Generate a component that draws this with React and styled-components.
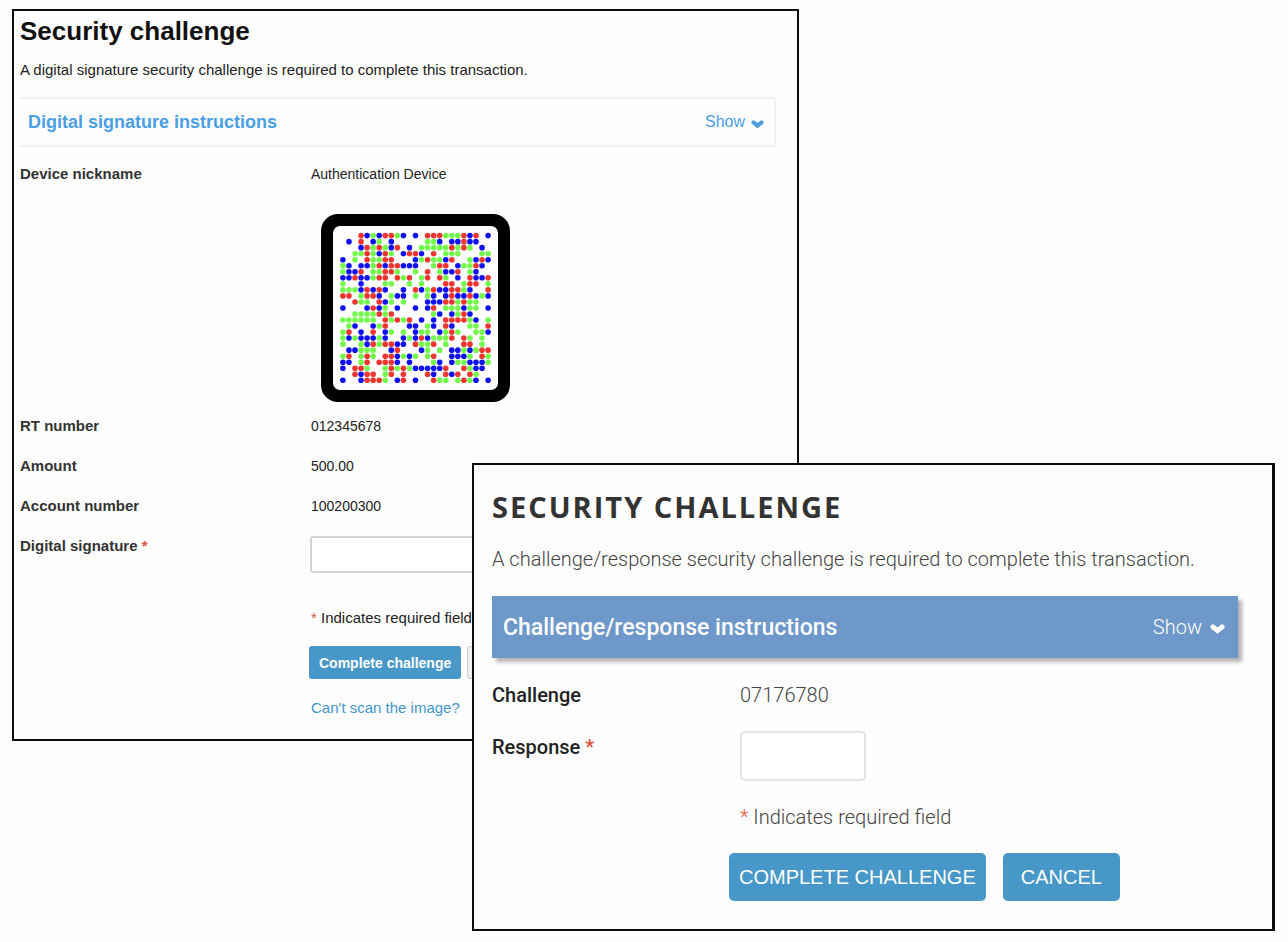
import React from "react";
import styled, { createGlobalStyle } from "styled-components";

const GlobalStyle = createGlobalStyle`
  *, *::before, *::after { box-sizing: border-box; }
  body { margin: 0; background: #fefefe; }
  h1, h2, p { margin: 0; }
`;

const Page = styled.main`
  display: grid;
  grid-template-columns: 460fr 327fr 476fr;
  align-items: start;
  padding: 9px 13px 11px 12px;
`;

const Panel = styled.section`
  min-width: 0;
  grid-row: 1;
  border: 2px solid #0c0c0c;
  background: #fefefe;
`;

const BackPanel = styled(Panel)`
  grid-column: 1 / 3;
  padding: 4px 21px 21px 6px;
  font: 15px/20px "Liberation Sans", Arial, sans-serif;
  color: #222;
`;

const FrontPanel = styled(Panel)`
  grid-column: 2 / 4;
  z-index: 1;
  margin-top: 454px;
  padding: 22px 34px 28px 18px;
  border-right-width: 3px;
  font: 300 20px/24px Roboto, sans-serif;
  color: #444;
`;

const Title = styled.h1`
  font-size: 26px;
  line-height: 32px;
  font-weight: 700;
  color: #111;
`;

const CapsTitle = styled.h2`
  font: 700 29px/40px "Open Sans", sans-serif;
  letter-spacing: 2px;
  text-transform: uppercase;
  color: #333;
`;

const Intro = styled.p`
  margin-top: ${(p) => p.$gap}px;
`;

const Disclosure = styled.button`
  display: flex;
  justify-content: space-between;
  align-items: center;
  width: 100%;
  font-family: inherit;
  cursor: pointer;
`;

const LightDisclosure = styled(Disclosure)`
  height: 50px;
  margin: 17px 0 7px;
  padding: 0 10px 0 8px;
  border: 2px solid #f2f2f2;
  border-left: 0;
  background: transparent;
  color: #4a9ee3;
  font-size: 18px;
  font-weight: 700;
`;

const BlueDisclosure = styled(Disclosure)`
  height: 62px;
  margin: 25px 0;
  padding: 0 13px 0 11px;
  border: 0;
  background: #6f98ca;
  box-shadow: 4px 4px 4px rgba(0, 0, 0, 0.3);
  color: #fff;
  font-size: 23px;
  font-weight: 500;
`;

const Toggle = styled.span`
  display: flex;
  align-items: center;
  gap: ${(p) => p.$gap}px;
  font-size: ${(p) => p.$size}px;
  font-weight: ${(p) => p.$weight};

  svg { margin-top: 4px; }
`;

const Row = styled.div`
  display: grid;
  grid-template-columns: 290px minmax(0, 1fr);
  align-items: start;
  padding: 10px 0;
`;

const WideRow = styled(Row)`
  grid-template-columns: 248px minmax(0, 1fr);
  padding: 0 0 24px;
`;

const Label = styled.label`
  font-weight: 700;
  color: #333;
`;

const MediumLabel = styled.label`
  padding-top: ${(p) => p.$drop || 0}px;
  font-weight: 500;
  color: #222;
`;

const Value = styled.output`
  padding-left: ${(p) => p.$inset || 0}px;
  font-size: ${(p) => p.$size}px;
`;

const Field = styled.input`
  width: ${(p) => p.$width}px;
  height: ${(p) => p.$height}px;
  padding: 0 8px;
  border: 2px solid ${(p) => p.$line};
  border-radius: ${(p) => p.$radius}px;
  background: #fff;
  font: inherit;
`;

const Star = styled.span`
  color: #e0503f;
`;

const CodeHolder = styled.div`
  padding: 20px 0 4px 301px;
`;

const CodeFrame = styled.div`
  width: 189px;
  height: 188px;
  border: 12px solid #000;
  border-radius: 17px;
  background: #000;

  svg {
    display: block;
    width: 100%;
    height: 100%;
    border-radius: 7px;
    background: #fff;
  }
`;

const Note = styled.p`
  padding: ${(p) => p.$top || 0}px 0 0 ${(p) => p.$indent}px;
`;

const Actions = styled.div`
  display: flex;
  gap: ${(p) => p.$gap}px;
  padding: ${(p) => p.$top}px 0 0 ${(p) => p.$indent}px;
`;

const SmallButton = styled.button`
  height: 33px;
  padding: 0 10px;
  border: ${(p) => (p.$plain ? "1px solid #ccc" : "0")};
  border-radius: 3px;
  background: ${(p) => (p.$plain ? "#eee" : "#4798c8")};
  color: ${(p) => (p.$plain ? "#333" : "#fff")};
  font: 700 14px/20px "Liberation Sans", Arial, sans-serif;
`;

const LargeButton = styled.button`
  height: 48px;
  padding: 0 ${(p) => p.$pad}px;
  border: 0;
  border-radius: 5px;
  background: #4798c8;
  color: #fff;
  font: 20px/24px "Liberation Sans", Arial, sans-serif;
  text-transform: uppercase;
  white-space: nowrap;
`;

const HelpLink = styled.a`
  display: block;
  width: fit-content;
  margin: 19px 0 0 291px;
  color: #3f97c9;
  text-decoration: none;
`;

const CODE = [
  "...RBGBRRGB.B.RRRGGGRBR.B",
  ".B.R.BG.B.....GGB.BBRBB..",
  "...BRGRGBR.B.GGGGGRGRG.B.",
  "..GGRGBRG.BRRB.R.GGG...GG",
  "B.G.RGGRR...BGRGGBR..GBRB",
  "GB.BBGRBRRBBB..GRR.BGGRB.",
  "GBBR.GGRRG..G.R.GBBR.GB..",
  "BBRBBGRR.RGR.GR.RG.B.RBBR",
  "G..B...GG..G.G...RR.GRR.G",
  "GGGBRBRB..B.RBGRBBRRGB..R",
  "RR.GRRB.GBB.G.GB.BRBBRBGB",
  "..RGG.RBG.G...BBBRRGRGG..",
  "B...BRBG.B..B.BR.GGGBGG.B",
  "..GGGGRGR......GB.BGRB...",
  "GGGGGG.RGRGR.B.B.RRRRGB.G",
  ".GB..BGR...BB.GB.RB..GG.R",
  "GR.B.R.BG.G.BGG.BGRG..GGB",
  "GBGBBBGB..BGBRBGGGR.RG.G.",
  "G..GBRGRRBB.RGGR.G..RR.G.",
  ".BBGGG..BR...BG.G.BBGBGRR",
  "GR.GRG.RRBGBG.GR..BBBG.RG",
  "BB.GR.RRRB.B...GB.BGGBBBG",
  "B.RRG..GRGRGBBBBBR..RGBB.",
  "..RBRR.GR.R...RB.RBR.RG..",
  "B..BRRRG.BR.B..RGG.GRGB.B",
];
const INK = { R: "#ee3530", G: "#74fa4c", B: "#1010f4" };

function ColourCode() {
  return (
    <CodeFrame>
      <svg viewBox="0 0 165 164" role="img" aria-label="Transaction code">
        {CODE.flatMap((line, y) =>
          [...line].map((c, x) =>
            c === "." ? null : (
              <circle key={`${x}-${y}`} cx={9.9 + x * 6.05} cy={9.6 + y * 6.03} r="2.8" fill={INK[c]} />
            )
          )
        )}
      </svg>
    </CodeFrame>
  );
}

function Chevron({ width }) {
  return (
    <svg width={width} height={(width * 9) / 14} viewBox="0 0 14 9" fill="currentColor" aria-hidden="true">
      <path d="M1 1.2Q2.6-.6 4.2 1L7 3.2 9.8 1Q11.4-.6 13 1.2 14.4 2.9 12.8 4.4L7 9 1.2 4.4Q-.4 2.9 1 1.2Z" />
    </svg>
  );
}

export default function App() {
  return (
    <>
      <GlobalStyle />
      <Page>
        <BackPanel>
          <Title>Security challenge</Title>
          <Intro $gap={13}>A digital signature security challenge is required to complete this transaction.</Intro>
          <LightDisclosure type="button">
            Digital signature instructions
            <Toggle $gap={6} $size={16} $weight={400}>Show <Chevron width={13} /></Toggle>
          </LightDisclosure>
          <Row>
            <Label htmlFor="device">Device nickname</Label>
            <Value id="device" $inset={1} $size={14}>Authentication Device</Value>
          </Row>
          <CodeHolder><ColourCode /></CodeHolder>
          <Row>
            <Label htmlFor="rt">RT number</Label>
            <Value id="rt" $inset={1} $size={14}>012345678</Value>
          </Row>
          <Row>
            <Label htmlFor="amount">Amount</Label>
            <Value id="amount" $inset={1} $size={14}>500.00</Value>
          </Row>
          <Row>
            <Label htmlFor="account">Account number</Label>
            <Value id="account" $inset={1} $size={14}>100200300</Value>
          </Row>
          <Row>
            <Label htmlFor="signature">Digital signature <Star>*</Star></Label>
            <Field id="signature" $width={240} $height={37} $line="#d4d4d4" $radius={3} />
          </Row>
          <Note $top={25} $indent={291}><Star>*</Star> Indicates required field</Note>
          <Actions $gap={6} $top={18} $indent={289}>
            <SmallButton type="button">Complete challenge</SmallButton>
            <SmallButton type="button" $plain>Cancel</SmallButton>
          </Actions>
          <HelpLink href="#help">Can't scan the image?</HelpLink>
        </BackPanel>

        <FrontPanel>
          <CapsTitle>Security challenge</CapsTitle>
          <Intro $gap={20}>A challenge/response security challenge is required to complete this transaction.</Intro>
          <BlueDisclosure type="button">
            Challenge/response instructions
            <Toggle $gap={8} $size={20} $weight={300}>Show <Chevron width={15} /></Toggle>
          </BlueDisclosure>
          <WideRow>
            <MediumLabel htmlFor="challenge">Challenge</MediumLabel>
            <Value id="challenge" $size={20}>07176780</Value>
          </WideRow>
          <WideRow>
            <MediumLabel htmlFor="response" $drop={4}>Response <Star>*</Star></MediumLabel>
            <Field id="response" $width={126} $height={50} $line="#e4e4e4" $radius={5} />
          </WideRow>
          <Note $indent={248}><Star>*</Star> Indicates required field</Note>
          <Actions $gap={17} $top={24} $indent={237}>
            <LargeButton type="button" $pad={10}>Complete challenge</LargeButton>
            <LargeButton type="button" $pad={18}>Cancel</LargeButton>
          </Actions>
        </FrontPanel>
      </Page>
    </>
  );
}
